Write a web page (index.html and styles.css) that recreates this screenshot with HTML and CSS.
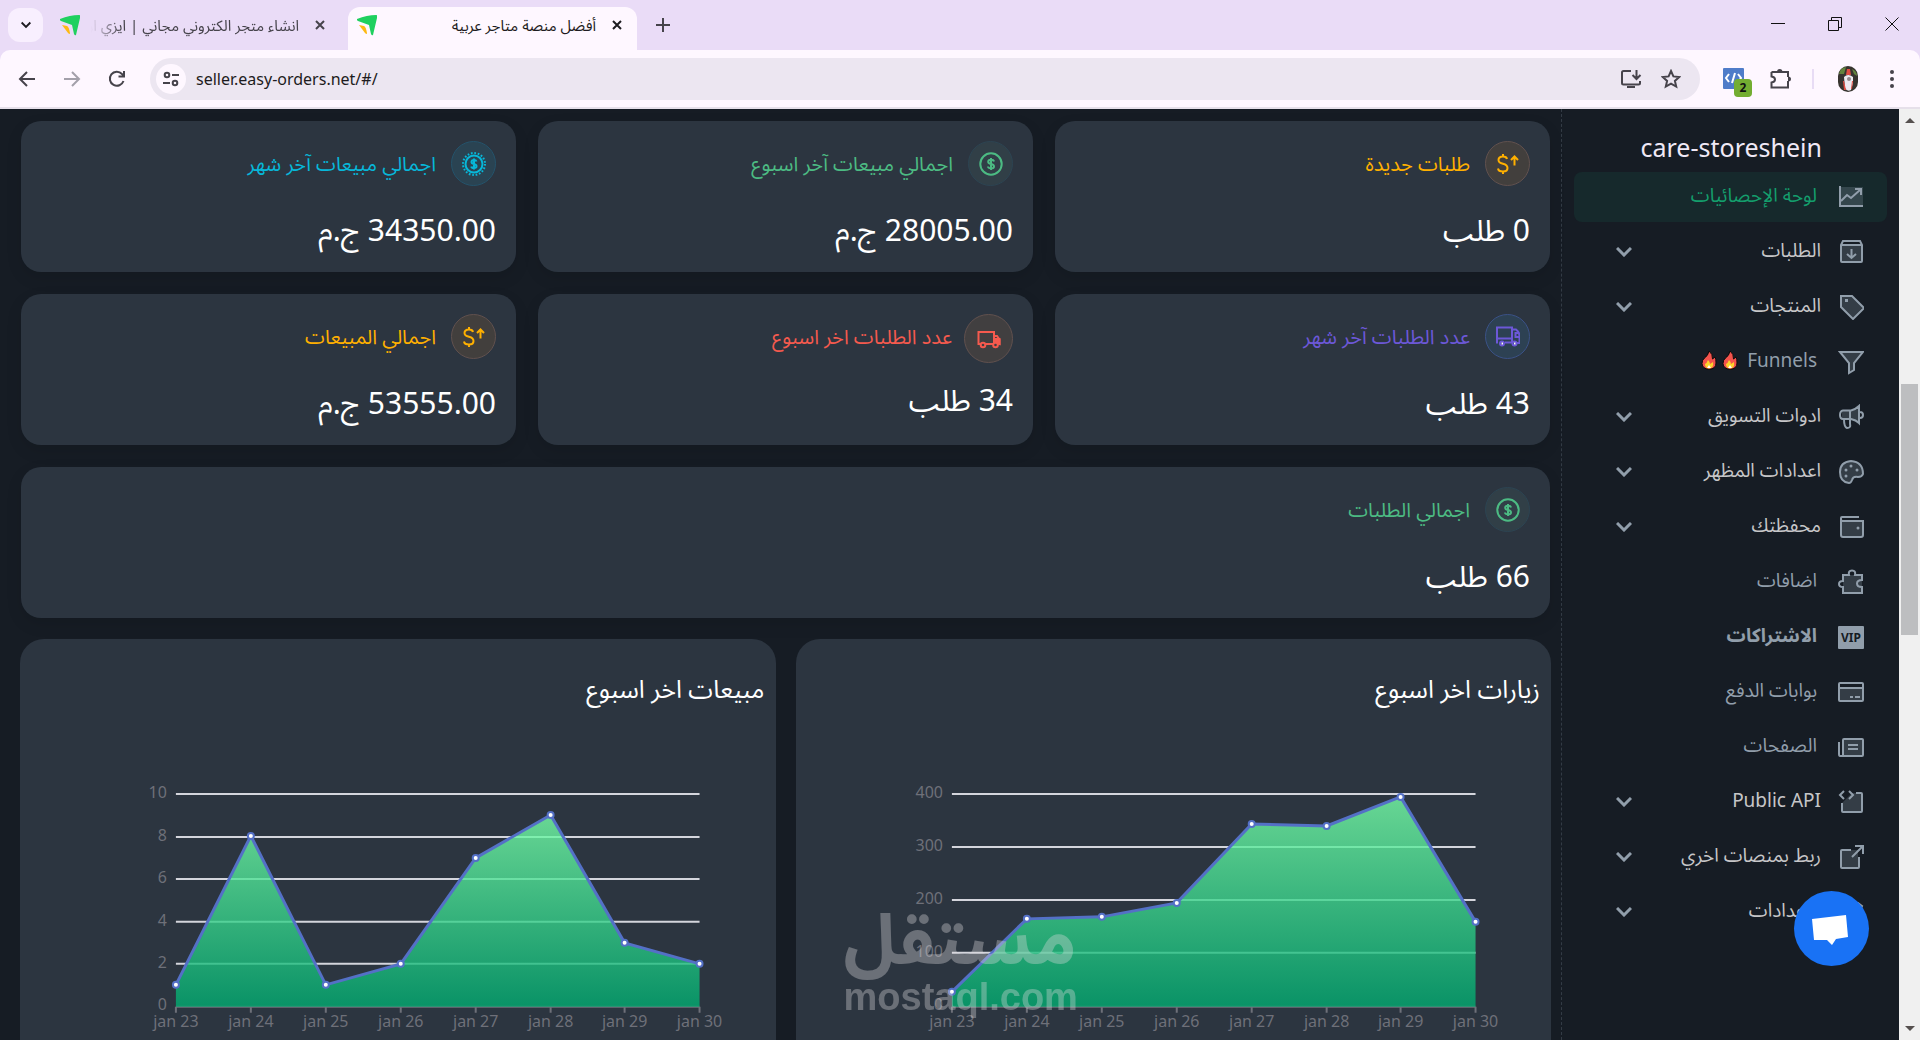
FILE: index.html
```html
<!DOCTYPE html>
<html lang="ar">
<head>
<meta charset="utf-8">
<title>أفضل منصة متاجر عربية</title>
<link rel="stylesheet" href="styles.css">
</head>
<body>
<svg class="defs" aria-hidden="true">
  <symbol id="logo" viewBox="0 0 20 21"><path fill="#1fd05f" d="M0 4Q10 0 19 0Q21 0 20 3L16 20Q15 21 14 19L12 10L1 6Q-1 5 0 4Z"/><path fill="#fdb913" d="M2 10L7 11Q9 12 10 18Q10 20 8 18Z"/></symbol>
  <symbol id="close" viewBox="0 0 12 12"><path d="M2 2L10 10M10 2L2 10"/></symbol>
  <symbol id="chevron" viewBox="0 0 16 10"><path d="M1 1L8 8L15 1"/></symbol>
  <symbol id="flame" viewBox="0 0 16 20"><path fill="#f4534c" stroke="#0a0a0a" d="M8 1Q7 6 3.500 8Q1 10 1 13.500Q1.500 19 8 19.300Q15 19 15 13Q15 9 14 7L11.500 9Q12 4 8 1Z"/><path fill="#fdd32b" d="M4 14Q6 13 7 10Q9 12 9 14L12 12Q13 18 8 18.500Q4 18 4 14Z"/><path fill="#fff" d="M6 18L8 15L10 18Z"/></symbol>
  <symbol id="dollar" viewBox="0 0 24 24"><circle cx="12" cy="12" r="10.7"/><path d="M15 9.5Q14.6 7.8 12 7.8Q9.2 7.8 9.2 9.8Q9.2 11.5 12 12Q15 12.6 15 14.4Q15 16.3 12 16.3Q9.2 16.3 9 14.5M12 6V18"/></symbol>
  <symbol id="money-up" viewBox="0 0 24 24"><path d="M11 7Q10.500 4.500 7 4.500Q2.500 4.500 2.500 8Q2.500 10.700 7 11.800Q11.500 13 11.500 16Q11.500 19.500 7 19.500Q2.500 19.500 2 16.500M7 2V4.500M7 19.500V22"/><path d="M18.500 13.500V5M15 8L18.500 4.500L22 8"/></symbol>
</svg>

<header class="chrome">
  <div class="tabstrip">
    <button class="tab-search" aria-label="Search tabs"><svg class="line i10"><use href="#chevron"/></svg></button>
    <div class="tab">
      <svg class="favicon"><use href="#logo"/></svg>
      <span class="tab-title faded" dir="rtl">انشاء متجر الكتروني مجاني | ايزي اوردرز</span>
      <button class="tab-close" aria-label="Close tab"><svg class="line i12"><use href="#close"/></svg></button>
    </div>
    <div class="tab active">
      <svg class="favicon"><use href="#logo"/></svg>
      <span class="tab-title" dir="rtl">أفضل منصة متاجر عربية</span>
      <button class="tab-close" aria-label="Close tab"><svg class="line i12"><use href="#close"/></svg></button>
    </div>
    <button class="new-tab" aria-label="New tab"><svg class="line i14" viewBox="0 0 14 14"><path d="M7 0V14M0 7H14"/></svg></button>
    <div class="window-controls">
      <button aria-label="Minimize"><svg class="thin i14" viewBox="0 0 14 14"><path d="M0 6.500H14"/></svg></button>
      <button aria-label="Restore"><svg class="thin i14" viewBox="0 0 14 14"><path d="M.5 3.500H10.500V13.500H.5ZM3.500 3V.5H13.500V10.500H11"/></svg></button>
      <button aria-label="Close"><svg class="thin i14" viewBox="0 0 14 14"><path d="M.5.5L13.500 13.500M13.500.5L.5 13.500"/></svg></button>
    </div>
  </div>
  <div class="toolbar">
    <button class="nav-btn" aria-label="Back"><svg class="line i18" viewBox="0 0 18 18"><path d="M17 9H2M9 2L2 9L9 16"/></svg></button>
    <button class="nav-btn dim" aria-label="Forward"><svg class="line i18" viewBox="0 0 18 18"><path d="M1 9H16M9 2L16 9L9 16"/></svg></button>
    <button class="nav-btn" aria-label="Reload"><svg class="line i18" viewBox="0 0 18 18"><path d="M15.500 11A7 7 0 1 1 14 4L16 6M16 1V6.500H10.500"/></svg></button>
    <div class="omnibox">
      <button class="site-info" aria-label="Site information"><svg class="line i18" viewBox="0 0 18 18"><circle cx="5" cy="5" r="2.300"/><path d="M10 5H17M1 13H8"/><circle cx="13" cy="13" r="2.300"/></svg></button>
      <input class="url" type="text" aria-label="Address" value="seller.easy-orders.net/#/">
      <button class="bar-btn" aria-label="Install app"><svg class="line i22" viewBox="0 0 22 22"><path d="M11 3H3.500Q2 3 2 4.500V15Q2 16.500 3.500 16.500H18.500Q20 16.500 20 15V13M7 19H15M16.500 2V10M12.500 7L16.500 11L20.500 7"/></svg></button>
      <button class="bar-btn" aria-label="Bookmark"><svg class="line i20" viewBox="0 0 20 20"><path d="M10 2L12.400 7.400L18.300 8L13.900 11.900L15.200 17.600L10 14.600L4.800 17.600L6.100 11.900L1.700 8L7.600 7.400Z"/></svg></button>
    </div>
    <button class="ext" aria-label="Extension"><svg class="i22" viewBox="0 0 22 22"><rect width="21" height="21" rx="1" fill="#4f7cc9"/><path d="M6 6L3 10L6 14M12 5L9 15M15 6L18 10L15 14" fill="none" stroke="#fff" stroke-width="2"/></svg><span class="badge">2</span></button>
    <button class="bar-btn" aria-label="Extensions"><svg class="line i22" viewBox="0 0 22 22"><path d="M2.500 4H19V9M19 13V19.500H2.500V14.500Q6 14 6 11.500T2.500 8.500V4"/><path class="knob" d="M8 4Q8 1 10.700 1T13.500 4ZM19 8.500Q22 8.500 22 11T19 13.500Z"/></svg></button>
    <span class="divider"></span>
    <button class="bar-btn profile" aria-label="Profile"><svg class="i24" viewBox="0 0 24 26"><rect x="2" width="20" height="26" rx="10" fill="#37342f"/><path d="M3 8Q4 2 10 1L8 8ZM16 3Q21 5 21 10L18 8Z" fill="#62833c"/><path d="M8 11Q12 7 17 11V17L15 24Q11 26 9 22Z" fill="#eceaf0"/><path d="M11 3H14L15 9H10ZM7 15H8L10 24H8ZM16 15H17L16 23H15Z" fill="#e04d43"/><circle cx="13" cy="13" r="2" fill="#948a8c"/></svg></button>
    <button class="bar-btn" aria-label="Menu"><svg class="i22" viewBox="0 0 22 22" fill="#46434b"><circle cx="11" cy="4" r="2"/><circle cx="11" cy="11" r="2"/><circle cx="11" cy="18" r="2"/></svg></button>
  </div>
</header>

<div class="page" dir="rtl">
  <div class="scrollbar" aria-hidden="true"><span class="arrow up"></span><span class="thumb"></span><span class="arrow down"></span></div>

  <nav class="sidebar">
    <h2 class="store">care-storeshein</h2>
    <a class="item current" href="#"><svg class="duo" viewBox="0 0 26 26"><path class="tint" d="M2 3H25V22H2Z"/><path d="M2 2V22H25M3 17L9 11L13 14L22 6M17 5H23V11"/></svg><span>لوحة الإحصائيات</span></a>
    <button class="item group"><svg class="duo" viewBox="0 0 26 26"><path class="tint" d="M3 6H24V23H3Z"/><path d="M3 6L5 2H22L24 6V22Q24 23 23 23H4Q3 23 3 22ZM3 6H24M13.500 10V19M9 15L13.500 19L18 15"/></svg><span>الطلبات</span><svg class="chev"><use href="#chevron"/></svg></button>
    <button class="item group"><svg class="duo" viewBox="0 0 26 26"><path class="tint" d="M3 2H14L25 13L15 24L3 13Z"/><path d="M3 2H14L26 14L15 25L3 13Z"/><rect class="dot" x="7" y="5" width="3" height="3"/></svg><span>المنتجات</span><svg class="chev"><use href="#chevron"/></svg></button>
    <a class="item" href="#"><svg class="duo" viewBox="0 0 26 26"><path class="tint" d="M2 3H25L16 14V21L11 23V14Z"/><path d="M2 3H25L16 14V21L11 24V14Z"/></svg><span class="fires"><bdi>Funnels</bdi><svg class="fire"><use href="#flame"/></svg><svg class="fire"><use href="#flame"/></svg></span></a>
    <button class="item group"><svg class="duo" viewBox="0 0 26 26"><path class="tint" d="M4 6H15L21 2V18L15 15H4Z"/><path d="M5 6.500H13Q18 5 21 2V19Q18 16 13 15H5Q2 15 2 11T5 6.500ZM12 7V15M22 8Q25 8 25 11T22 14M6 15Q6 23 9 24Q13 24 12 20V15"/></svg><span>ادوات التسويق</span><svg class="chev"><use href="#chevron"/></svg></button>
    <button class="item group"><svg class="duo" viewBox="0 0 26 26"><path class="tint" d="M13 2Q25 3 25 15Q24 18 20 18Q15 17 14 21Q13 24 11 24Q2 23 2 13T13 2Z"/><path d="M13 2Q25 3 25 15Q24 18 20 18Q15 17 14 21Q13 24 11 24Q2 23 2 13T13 2Z"/><circle class="dot" cx="8" cy="11" r="1.500"/><circle class="dot" cx="13" cy="7" r="1.500"/><circle class="dot" cx="19" cy="11" r="1.500"/><circle class="dot" cx="8" cy="17" r="1.500"/></svg><span>اعدادات المظهر</span><svg class="chev"><use href="#chevron"/></svg></button>
    <button class="item group"><svg class="duo" viewBox="0 0 26 26"><path class="tint" d="M3 7H25V23H3Z"/><path d="M21 3H4Q3 3 3 4V21Q3 23 5 23H23Q25 23 25 21V7H4Q3 7 3 4"/><circle class="dot" cx="20" cy="14" r="1.500"/></svg><span>محفظتك</span><svg class="chev"><use href="#chevron"/></svg></button>
    <a class="item" href="#"><svg class="duo" viewBox="0 0 26 26"><path class="tint" d="M5 6H24V24H5Z"/><path d="M5 6H11Q10 1.500 14 1.500T17 6H24V11Q19 11 19 14.500T24 18V24H5V18Q1 18 1 15T5 12Z"/></svg><span>اضافات</span></a>
    <a class="item strong" href="#"><svg class="duo" viewBox="0 0 26 26"><rect class="solid" x="0" y="2" width="26" height="23" rx="1"/><text x="13" y="18" text-anchor="middle" class="vip">VIP</text></svg><span>الاشتراكات</span></a>
    <a class="item" href="#"><svg class="duo" viewBox="0 0 26 26"><path class="tint" d="M1 9H25V22H1Z"/><path d="M2 4H24Q25 4 25 5V21Q25 22 24 22H2Q1 22 1 21V5Q1 4 2 4ZM1 9H25M12 18H15M17 18H22"/></svg><span>بوابات الدفع</span></a>
    <a class="item" href="#"><svg class="duo" viewBox="0 0 26 26"><path class="tint" d="M5 5H25V22H5Z"/><path d="M6 5H24Q25 5 25 6V21Q25 22 24 22H2Q1 22 1 20V8M5 21V6Q5 5 6 5M10 11H20M10 15H20"/></svg><span>الصفحات</span></a>
    <button class="item group"><svg class="duo" viewBox="0 0 26 26"><path class="tint" d="M4 14L14 4H23V23H4Z"/><path d="M18 4H23Q24 4 24 5V22Q24 23 23 23H5Q4 23 4 22V14M6 2L2 6L6 10M11 2L15 6L11 10"/></svg><span>Public API</span><svg class="chev"><use href="#chevron"/></svg></button>
    <button class="item group"><svg class="duo" viewBox="0 0 26 26"><path class="tint" d="M3 6H20V24H3Z"/><path d="M13 6H4Q3 6 3 7V23Q3 24 4 24H20Q21 24 21 23V13M17 2H25V10M25 2L14 13"/></svg><span>ربط بمنصات اخري</span><svg class="chev"><use href="#chevron"/></svg></button>
    <button class="item group"><svg class="duo" viewBox="0 0 26 26"><circle cx="13" cy="13" r="4"/><path d="M11 2H15L16 5L20 4L24 7L22 11V15L24 19L20 22L16 21L15 24H11L10 21L6 22L2 19L4 15V11L2 7L6 4L10 5Z"/></svg><span>الاعدادات</span><svg class="chev"><use href="#chevron"/></svg></button>
  </nav>

  <main class="content">
    <section class="stats">
      <article class="card amber"><div class="head"><span class="disc"><svg class="glyph"><use href="#money-up"/></svg></span><h3>طلبات جديدة</h3></div><p class="value">0 طلب</p></article>
      <article class="card green"><div class="head"><span class="disc"><svg class="glyph"><use href="#dollar"/></svg></span><h3>اجمالي مبيعات آخر اسبوع</h3></div><p class="value">28005.00 ج.م</p></article>
      <article class="card cyan"><div class="head"><span class="disc"><svg class="glyph" viewBox="0 0 24 24"><circle cx="12" cy="12" r="11" stroke-dasharray="1.700 1.756"/><circle cx="12" cy="12" r="8.500"/><path d="M14.500 9.500Q14 8 12 8Q9.500 8 9.500 10Q9.500 11.500 12 12Q14.500 12.500 14.500 14.300Q14.500 16 12 16Q9.500 16 9.300 14.500M12 6.500V17.500"/></svg></span><h3>اجمالي مبيعات آخر شهر</h3></div><p class="value">34350.00 ج.م</p></article>
      <article class="card violet"><div class="head"><span class="disc"><svg class="glyph" viewBox="0 0 24 24"><path d="M2 17.500H1V2.500H16V17.500H9M1 13.500H16M16 4.500H20Q23.500 7 23.500 11V18H21M16 18H17M22 8H19.500V12H23"/><circle cx="6" cy="18.500" r="2"/><circle cx="18.500" cy="18.500" r="2"/><path stroke="#fff" d="M5.500 18.500H7M18 18.500H19.500"/></svg></span><h3>عدد الطلبات آخر شهر</h3></div><p class="value">43 طلب</p></article>
      <article class="card red large-icon"><div class="head"><span class="disc"><svg class="glyph" viewBox="0 0 24 24"><path d="M3 17H1.500V5H17V17H9M17 9H20L22.500 12.500V17H21"/><path d="M17 12H22.500V17L17 15Z" fill="#f55a4e"/><circle cx="6" cy="18" r="2.300"/><circle cx="18.500" cy="18" r="2.300" fill="#413f40"/></svg></span><h3>عدد الطلبات اخر اسبوع</h3></div><p class="value">34 طلب</p></article>
      <article class="card amber"><div class="head"><span class="disc"><svg class="glyph"><use href="#money-up"/></svg></span><h3>اجمالي المبيعات</h3></div><p class="value">53555.00 ج.م</p></article>
      <article class="card green wide"><div class="head"><span class="disc"><svg class="glyph"><use href="#dollar"/></svg></span><h3>اجمالي الطلبات</h3></div><p class="value">66 طلب</p></article>
    </section>

    <section class="charts">
      <article class="panel">
        <h3>زيارات اخر اسبوع</h3>
        <svg class="chart" viewBox="0 0 756 320" direction="ltr">
          <defs><linearGradient id="g" x1="0" y1="0" x2="0" y2="1"><stop offset="0" stop-color="#77ffa9"/><stop offset="1" stop-color="#01aa70"/></linearGradient></defs>
          <path class="grid" d="M156 64H680M156 117H680M156 170H680M156 223H680"/>
          <path class="axis" d="M156 277H680M156 277V283M231 277V283M306 277V283M381 277V283M456 277V283M531 277V283M605 277V283M680 277V283"/>
          <path class="area" fill="url(#g)" d="M156 262L231 189L306 187L381 173L456 94L531 96L605 67L680 192V277H156Z"/>
          <path class="series" d="M156 262L231 189L306 187L381 173L456 94L531 96L605 67L680 192"/>
          <g class="points"><circle cx="156" cy="262" r="3"/><circle cx="231" cy="189" r="3"/><circle cx="306" cy="187" r="3"/><circle cx="381" cy="173" r="3"/><circle cx="456" cy="94" r="3"/><circle cx="531" cy="96" r="3"/><circle cx="605" cy="67" r="3"/><circle cx="680" cy="192" r="3"/></g>
          <g class="ylab"><text x="147" y="68">400</text><text x="147" y="121">300</text><text x="147" y="174">200</text><text x="147" y="227">100</text><text x="147" y="280">0</text></g>
          <g class="xlab"><text x="156" y="297">jan 23</text><text x="231" y="297">jan 24</text><text x="306" y="297">jan 25</text><text x="381" y="297">jan 26</text><text x="456" y="297">jan 27</text><text x="531" y="297">jan 28</text><text x="605" y="297">jan 29</text><text x="680" y="297">jan 30</text></g>
        </svg>
        <div class="watermark" aria-hidden="true"><span class="wm-ar">مستقل</span><span class="wm-en">mostaql.com</span></div>
      </article>
      <article class="panel">
        <h3>مبيعات اخر اسبوع</h3>
        <svg class="chart" viewBox="0 0 756 320" direction="ltr">
          <path class="grid" d="M156 64H680M156 107H680M156 149H680M156 192H680M156 234H680"/>
          <path class="axis" d="M156 277H680M156 277V283M231 277V283M306 277V283M381 277V283M456 277V283M531 277V283M605 277V283M680 277V283"/>
          <path class="area" fill="url(#g)" d="M156 255L231 106L306 255L381 234L456 128L531 85L605 213L680 234V277H156Z"/>
          <path class="series" d="M156 255L231 106L306 255L381 234L456 128L531 85L605 213L680 234"/>
          <g class="points"><circle cx="156" cy="255" r="3"/><circle cx="231" cy="106" r="3"/><circle cx="306" cy="255" r="3"/><circle cx="381" cy="234" r="3"/><circle cx="456" cy="128" r="3"/><circle cx="531" cy="85" r="3"/><circle cx="605" cy="213" r="3"/><circle cx="680" cy="234" r="3"/></g>
          <g class="ylab"><text x="147" y="68">10</text><text x="147" y="111">8</text><text x="147" y="153">6</text><text x="147" y="196">4</text><text x="147" y="238">2</text><text x="147" y="280">0</text></g>
          <g class="xlab"><text x="156" y="297">jan 23</text><text x="231" y="297">jan 24</text><text x="306" y="297">jan 25</text><text x="381" y="297">jan 26</text><text x="456" y="297">jan 27</text><text x="531" y="297">jan 28</text><text x="605" y="297">jan 29</text><text x="680" y="297">jan 30</text></g>
        </svg>
      </article>
    </section>
  </main>
  <button class="chat" aria-label="Chat"><svg viewBox="0 0 75 75"><path fill="#fff" d="M18 28L52 24L54 46L42 48L38 54L33 49L20 49Z"/></svg></button>
</div>
</body>
</html>
```
FILE: styles.css
```css
* { box-sizing: border-box; }
body {
  margin: 0;
  height: 100vh;
  display: flex;
  flex-direction: column;
  overflow: hidden;
  font-family: "Noto Sans", "Noto Sans Arabic", "Open Sans", "DejaVu Sans", sans-serif;
  background: #161c24;
}
button {
  border: 0;
  padding: 0;
  background: none;
  font: inherit;
  color: inherit;
  display: flex;
  align-items: center;
  justify-content: center;
  flex: none;
}
h2, h3, p { margin: 0; font-weight: 400; }
svg { display: block; flex: none; }
.defs { position: absolute; width: 0; height: 0; }
.line { fill: none; stroke: currentColor; stroke-width: 2; }
.knob { fill: currentColor; stroke: none; }
.thin { fill: none; stroke: #111; stroke-width: 1; }
.i10 { width: 10px; height: 8px; }
.tab-search .line { stroke-width: 3; }
.i12 { width: 12px; height: 12px; }
.i14 { width: 14px; height: 14px; }
.i18 { width: 18px; height: 18px; }
.i20 { width: 20px; height: 20px; }
.i22 { width: 22px; height: 22px; }
.i24 { width: 24px; height: 26px; }

/* browser frame */
.chrome { flex: none; background: #eadcf7; color: #46434b; }
.tabstrip { display: flex; height: 50px; padding-left: 8px; align-items: flex-end; }
.tab-search { width: 35px; height: 34px; margin-bottom: 8px; border-radius: 12px; background: #f8effe; color: #1d1b20; }
.tab { display: flex; align-items: center; width: 289px; height: 43px; padding: 0 10px 7px 9px; margin-left: 8px; gap: 11px; }
.tab.active { background: #fef7ff; border-radius: 12px 12px 0 0; color: #1d1b20; }
.favicon { width: 20px; height: 21px; }
.tab-title { flex: 1; min-width: 0; font-size: 15px; line-height: 24px; white-space: nowrap; overflow: hidden; }
.faded { mask-image: linear-gradient(to right, transparent, #000 30px); }
.tab-close { width: 20px; height: 20px; }
.new-tab { width: 30px; height: 30px; margin: 0 0 10px 11px; }
.window-controls { display: flex; margin: 0 0 19px auto; gap: 43px; padding-right: 21px; }
.toolbar {
  display: flex;
  align-items: center;
  height: 59px;
  padding: 0 17px 0 18px;
  background: #fef7ff;
  border-radius: 10px 10px 0 0;
  border-bottom: 2px solid #e6e0ea;
}
.nav-btn { width: 18px; height: 42px; margin-right: 27px; }
.nav-btn:nth-child(3) { margin-right: 24px; }
.dim { color: #a3a0aa; }
.omnibox { flex: 1; display: flex; align-items: center; height: 42px; padding: 0 19px 0 6px; border-radius: 21px; background: #ece6f1; }
.site-info { width: 30px; height: 30px; border-radius: 15px; background: #fef7ff; }
.url { flex: 1; min-width: 0; border: 0; padding: 0; margin-left: 10px; background: none; color: #1d1b20; font: 16px/24px "Noto Sans", sans-serif; outline: 0; }
.bar-btn { margin-left: 19px; }
.ext { position: relative; margin-left: 23px; margin-right: 5px; }
.badge { position: absolute; left: 11px; top: 11px; width: 18px; height: 18px; border-radius: 4px; background: #73ad31; color: #111; font-size: 12px; line-height: 18px; font-weight: 700; }
.divider { width: 2px; height: 20px; margin-left: 21px; background: #e8dcf5; }
.profile { margin: 0 2px 0 22px; }

/* page */
.page { flex: 1; min-height: 0; display: flex; overflow: hidden; position: relative; color: #fff; }
.scrollbar { flex: none; width: 21px; background: #f0f0f0; display: flex; flex-direction: column; align-items: center; justify-content: space-between; padding: 9px 0; }
.thumb { width: 17px; height: 27.5%; background: #bdbec0; margin-bottom: 130px; }
.arrow { width: 0; height: 0; border: 5px solid transparent; }
.up { border-top: 0; border-bottom-color: #55504f; }
.down { border-bottom: 0; border-top-color: #55504f; }

.sidebar { flex: none; width: 338px; padding: 21px 12px 0; border-left: 1px dashed #333b45; display: flex; flex-direction: column; gap: 5px; }
.store { font-size: 25px; line-height: 35px; margin-bottom: 2px; padding-right: 65px; color: #f0e9f6; }
.item {
  display: flex;
  align-items: center;
  justify-content: flex-start;
  height: 50px;
  flex: none;
  padding: 0 23px 0 42px;
  gap: 21px;
  border-radius: 8px;
  font-size: 19px;
  line-height: 26px;
  color: #919eab;
  text-decoration: none;
}
.item span { padding-bottom: 4px; white-space: nowrap; }
.group { gap: 17px; color: #c6c6c8; }
.current { background: #16292c; color: #149e6c; }
.strong { font-weight: 700; }
.duo { width: 26px; height: 26px; fill: none; stroke: #919eab; stroke-width: 2; }
.tint { fill: #919eab; opacity: .25; stroke: none; }
.dot, .solid { fill: #919eab; stroke: none; }
.vip { font: 700 12px "Noto Sans", sans-serif; fill: #161c24; stroke: none; }
.chev { width: 16px; height: 10px; margin-right: auto; fill: none; stroke: #919eab; stroke-width: 3; }
.fires { display: flex; align-items: center; gap: 5px; }
.fires bdi { margin-left: 4px; }
.fire { width: 16px; height: 20px; }

.content { flex: 1; min-width: 0; padding: 12px 11px 0 20px; }
.stats { display: grid; grid-template-columns: repeat(3, 1fr); gap: 22px; padding: 0 0 0 1px; }
.card { padding: 20px 20px 19px; border-radius: 20px; background: #2c3540; box-shadow: 0 6px 16px rgba(0, 0, 0, .1); }
.wide { grid-column: 1 / -1; }
.head { display: flex; align-items: center; gap: 15px; color: var(--tone); }
.head h3 { font-size: 20px; line-height: 30px; }
.disc { width: 45px; height: 45px; border-radius: 50%; display: flex; align-items: center; justify-content: center; border: 1px solid var(--edge); background: var(--disc); }
.glyph { width: 24px; height: 24px; fill: none; stroke: var(--tone); stroke-width: 2; }
.value { margin-top: 21px; font-size: 30px; line-height: 46px; }
.large-icon .head { gap: 12px; }
.large-icon .head h3 { padding-bottom: 3px; }
.large-icon .disc { width: 49px; height: 49px; }
.large-icon .value { margin-top: 14px; }
.amber { --tone: #ffb000; --disc: #423f3d; --edge: #61514e; }
.green { --tone: #4cbb83; --disc: #313f47; --edge: #2c4452; }
.cyan { --tone: #07b7d9; --disc: #2a4352; --edge: #24536b; }
.violet { --tone: #6c58d8; --disc: #2d4153; --edge: #3b5287; }
.red { --tone: #f55a4e; --disc: #413f40; --edge: #61514e; }

.charts { display: grid; grid-template-columns: 1fr 1fr; gap: 20px; margin-top: 21px; margin-right: -1px; }
.panel { position: relative; padding: 31px 0 80px; border-radius: 24px; background: #2c3540; }
.panel h3 { padding-right: 11px; font-size: 25px; line-height: 36px; }
.chart { width: 100%; margin-top: 24px; }
.grid { stroke: #d4d5dc; stroke-width: 2; fill: none; }
.axis { stroke: #6e7079; stroke-width: 2; fill: none; }
.area { opacity: .8; }
.series { fill: none; stroke: #5470c6; stroke-width: 3; }
.points { fill: #fff; stroke: #5470c6; stroke-width: 2; }
.ylab, .xlab { font-size: 16px; fill: #6e7079; }
.ylab { text-anchor: end; }
.xlab { text-anchor: middle; }
.watermark { position: absolute; left: 48px; top: 258px; display: flex; flex-direction: column; direction: ltr; width: 230px; opacity: .35; color: #e0dde0; }
.wm-ar { font-size: 70px; line-height: 80px; font-weight: 700; text-align: center; }
.wm-en { font: 700 38px/40px "Liberation Sans", sans-serif; }

.chat { position: absolute; right: 51px; bottom: 74px; width: 75px; height: 75px; border-radius: 50%; background: #1972f5; }
.chat svg { width: 75px; height: 75px; }
```
